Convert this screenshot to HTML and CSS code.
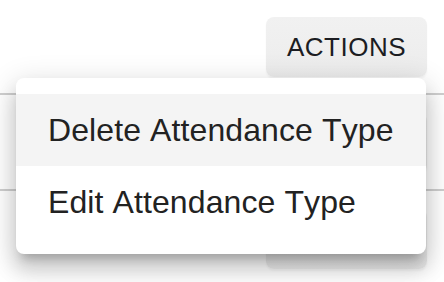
FILE: index.html
```html
<!DOCTYPE html>
<html>
<head>
<meta charset="utf-8">
<link rel="stylesheet" href="styles.css">
</head>
<body>
<div class="rows">
  <div class="row"><button class="actions">ACTIONS</button></div>
  <div class="row"><button class="actions" aria-label="ACTIONS"></button></div>
  <div class="row"><button class="actions" aria-label="ACTIONS"></button></div>
</div>
<ul class="menu">
  <li class="item active">Delete Attendance Type</li>
  <li class="item">Edit Attendance Type</li>
</ul>
</body>
</html>
```
FILE: styles.css
```css
html, body {
  margin: 0;
  padding: 0;
  background: #ffffff;
  font-family: "Liberation Sans", Arial, sans-serif;
  overflow: hidden;
}
body {
  width: 444px;
  height: 282px;
  position: relative;
}
.rows {
  margin-top: -1px;
}
.row {
  height: 96px;
  box-sizing: border-box;
  border-bottom: 2px solid #cfcfcf;
  display: flex;
  align-items: center;
  justify-content: flex-end;
  padding-right: 17px;
}
.actions {
  width: 161px;
  height: 60px;
  border: none;
  border-radius: 8px;
  background: linear-gradient(#f1f1f1, #ececec);
  box-shadow: 0 2px 2px rgba(0, 0, 0, 0.04);
  font-family: "Liberation Sans", Arial, sans-serif;
  font-size: 26px;
  letter-spacing: 0.5px;
  font-kerning: none;
  color: #1c1d22;
  padding: 0;
  margin-top: 2px;
}
.menu {
  position: absolute;
  left: 16px;
  top: 78px;
  width: 410px;
  margin: 0;
  padding: 16px 0;
  list-style: none;
  background: #ffffff;
  border-radius: 8px;
  box-shadow: 0 10px 10px -6px rgba(0, 0, 0, 0.2),
              0 16px 20px 2px rgba(0, 0, 0, 0.14),
              0 6px 28px 4px rgba(0, 0, 0, 0.12);
}
.item {
  height: 72px;
  display: flex;
  align-items: center;
  padding-left: 32px;
  font-size: 32px;
  letter-spacing: 0.1px;
  font-kerning: none;
  color: #222222;
}
.item.active {
  background: #f4f4f4;
}
```
